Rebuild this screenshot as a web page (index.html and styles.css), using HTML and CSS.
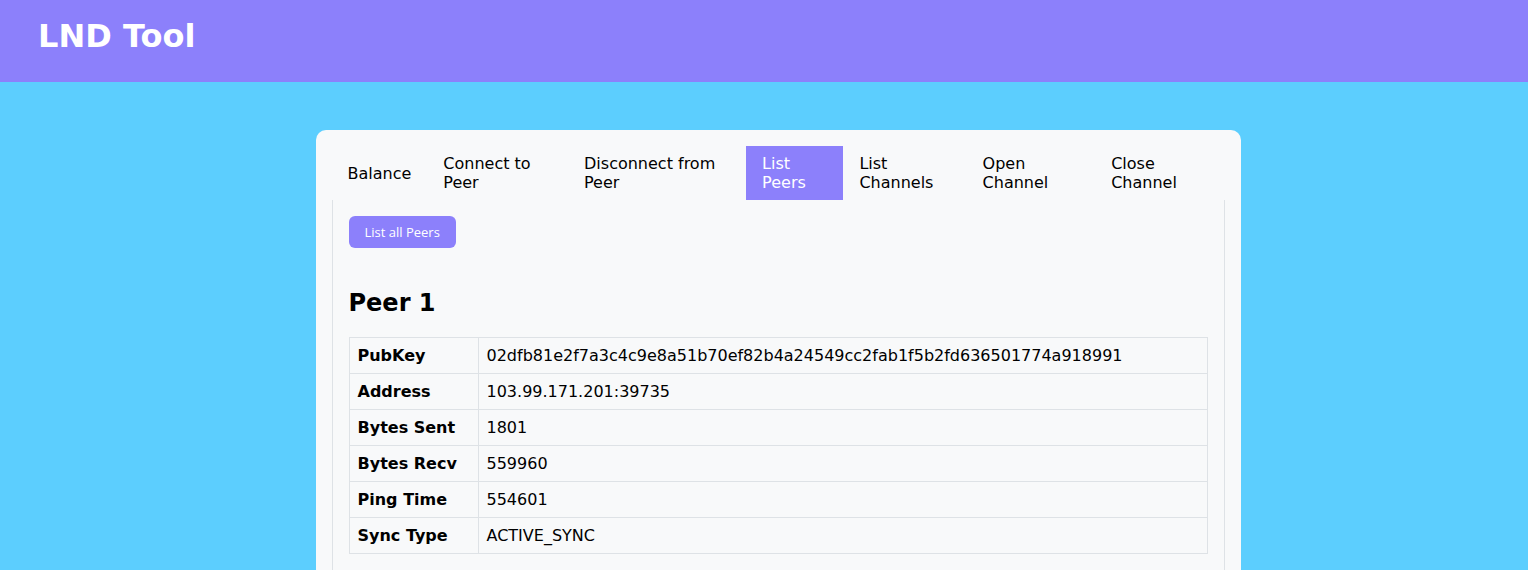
FILE: index.html
```html
<!DOCTYPE html>
<html>
<head>
<meta charset="utf-8">
<title>LND Tool</title>
<link rel="stylesheet" href="styles.css">
</head>
<body>
<header class="topbar">
  <h1 class="brand">LND Tool</h1>
</header>
<main class="page">
  <section class="card">
    <ul class="tabs">
      <li class="tab">Balance</li>
      <li class="tab">Connect to Peer</li>
      <li class="tab">Disconnect from Peer</li>
      <li class="tab active">List Peers</li>
      <li class="tab">List Channels</li>
      <li class="tab">Open Channel</li>
      <li class="tab">Close Channel</li>
    </ul>
    <div class="panel">
      <button class="btn">List all Peers</button>
      <h2 class="peer-title">Peer 1</h2>
      <table class="info">
        <tr><th>PubKey</th><td>02dfb81e2f7a3c4c9e8a51b70ef82b4a24549cc2fab1f5b2fd636501774a918991</td></tr>
        <tr><th>Address</th><td>103.99.171.201:39735</td></tr>
        <tr><th>Bytes Sent</th><td>1801</td></tr>
        <tr><th>Bytes Recv</th><td>559960</td></tr>
        <tr><th>Ping Time</th><td>554601</td></tr>
        <tr><th>Sync Type</th><td>ACTIVE_SYNC</td></tr>
      </table>
    </div>
  </section>
</main>
</body>
</html>
```
FILE: styles.css
```css
* { box-sizing: border-box; }
html, body { margin: 0; padding: 0; }
body {
  background: #5ccefe;
  font-family: "DejaVu Sans", sans-serif;
  font-size: 16px;
  color: #000;
}
.topbar {
  background: #8c80fb;
  height: 82px;
  padding: 0 39px;
  display: flex;
  align-items: flex-start;
}
.brand {
  margin: 0 0 0 -1px;
  padding-top: 17px;
  font-size: 32px;
  line-height: 38px;
  font-weight: bold;
  color: #fff;
}
.page {
  display: flex;
  justify-content: center;
  padding-top: 48px;
  padding-left: 28px;
}
.card {
  width: 925px;
  background: #f8f9fa;
  border-radius: 10px;
  padding: 16px 16px 40px;
}
.tabs {
  list-style: none;
  margin: 0;
  padding: 0;
  display: flex;
}
.tab {
  padding: 8px 16px;
  line-height: 19px;
  min-height: 54px;
  display: flex;
  align-items: center;
}
.tab.active {
  background: #8c80fb;
  color: #fff;
}
.panel {
  border-left: 1px solid #dee2e6;
  border-right: 1px solid #dee2e6;
  padding: 16px 16px 20px;
}
.btn {
  display: block;
  background: #8c80fb;
  color: #fff;
  border: none;
  border-radius: 6px;
  height: 32px;
  padding: 0 16px;
  font-family: "Open Sans", sans-serif;
  font-size: 13px;
  cursor: pointer;
}
.peer-title {
  margin: 41px 0 19px;
  font-size: 24px;
  line-height: 29px;
  font-weight: bold;
}
.info {
  width: 100%;
  border-collapse: collapse;
}
.info th, .info td {
  border: 1px solid #dee2e6;
  padding: 8px;
  line-height: 19px;
  text-align: left;
  font-weight: normal;
}
.info th {
  font-weight: bold;
  width: 129px;
}
```
